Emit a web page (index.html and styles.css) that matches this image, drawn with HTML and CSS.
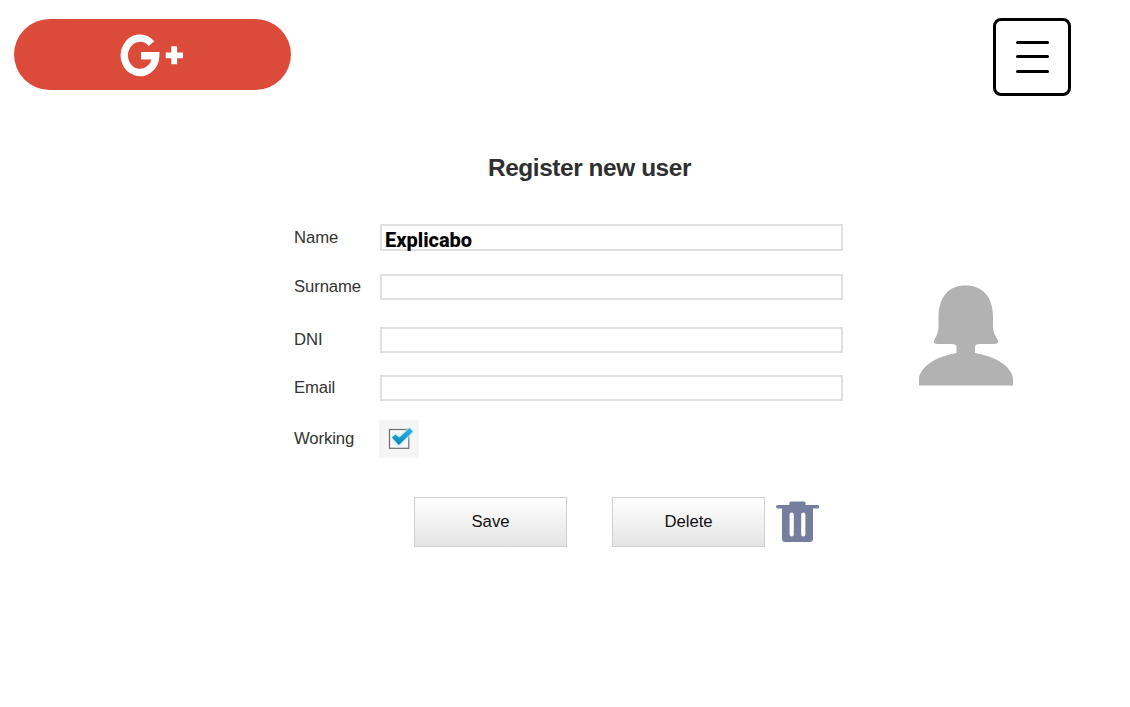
FILE: index.html
```html
<!DOCTYPE html>
<html lang="en">
<head>
<meta charset="utf-8">
<title>Register new user</title>
<link rel="stylesheet" href="styles.css">
</head>
<body>
<header class="header">
  <a class="gplus" href="#" aria-label="Google Plus">
    <svg class="gplus-icon" viewBox="0 0 64 44">
      <path d="M31.500 10.600A15.700 17.200 0 1 0 35.700 22.800H21" fill="none" stroke="#fff" stroke-width="7.400"/>
      <path d="M54.200 13.300v18M45.700 22.300h17.300" fill="none" stroke="#fff" stroke-width="5.800"/>
    </svg>
  </a>
  <button class="menu" aria-label="Menu">
    <span class="menu-line"></span>
    <span class="menu-line"></span>
    <span class="menu-line"></span>
  </button>
</header>
<main class="main">
  <form class="form">
    <h1 class="title">Register new user</h1>
    <div class="row row-name"><span class="label">Name</span><div class="field" contenteditable="true">Explicabo</div></div>
    <div class="row row-surname"><label class="label" for="surname">Surname</label><input class="field" id="surname"></div>
    <div class="row row-dni"><label class="label" for="dni">DNI</label><input class="field" id="dni"></div>
    <div class="row row-email"><label class="label" for="email">Email</label><input class="field" id="email"></div>
    <div class="row row-working">
      <span class="label">Working</span>
      <span class="check">
        <svg width="40" height="38" viewBox="0 0 40 38">
          <defs>
            <linearGradient id="tick" x1="0" y1="0" x2="0" y2="1"><stop offset="0" stop-color="#35b4e2"/><stop offset="1" stop-color="#0785b8"/></linearGradient>
            <filter id="glow" x="-30%" y="-30%" width="160%" height="160%"><feGaussianBlur stdDeviation="1.300"/></filter>
          </defs>
          <rect x="10.500" y="9.500" width="19.300" height="18.800" fill="#f8f8f8" stroke="#6e6e6e" stroke-width="1.200"/>
          <path d="M14 18l3.500-3 3.500 3.500 9-10 3.500 3.500-13.500 13z" fill="#b9ecff" stroke="#b9ecff" stroke-width="2" filter="url(#glow)"/>
          <path d="M12.800 17.500l3.500-3 4 3L30.500 8l3.300 3.500-14 13.500z" fill="url(#tick)"/>
        </svg>
      </span>
    </div>
    <div class="actions">
      <button class="button" type="button">Save</button>
      <button class="button" type="button">Delete</button>
      <svg class="trash" width="43" height="42" viewBox="0 0 43 42">
        <path fill="#757e9f" fill-rule="evenodd" d="M13.500 4V2q0-1.500 1.500-1.500h13q1.500 0 1.500 1.500v2H41.500a1.700 1.700 0 0 1 0 3.500H37V37.500q0 3.500-3.500 3.500H9.500Q6 41 6 37.500V7.500H1.800a1.700 1.700 0 0 1 0-3.500zM13.600 13.500v20a2.100 2.100 0 0 0 4.200 0v-20a2.100 2.100 0 0 0-4.200 0zM25.200 13.500v20a2.100 2.100 0 0 0 4.200 0v-20a2.100 2.100 0 0 0-4.200 0z"/>
      </svg>
    </div>
  </form>
  <svg class="avatar" width="94" height="101" viewBox="0 0 94 101">
    <path fill="#b2b2b2" d="M0 100.500V94C1 81 19 71 37.500 68V62Q37.500 59 33 59H18Q14 58.500 15 55.500Q19 49 19.500 43V32C20 11 30 .5 46.500.5S74 11 74 32V43Q74.500 49 79 55.500Q80 58.500 76 59H60.500Q56 59 56 62V68C75 71 93 81 94 94V100.500z"/>
  </svg>
</main>
</body>
</html>
```
FILE: styles.css
```css
* { box-sizing: border-box; }
body {
  margin: 0;
  height: 707px;
  overflow: hidden;
  background: #fff;
  font-family: "Liberation Sans", Arial, sans-serif;
  font-size: 16.7px;
  color: #333;
}
.header {
  display: flex;
  justify-content: space-between;
  align-items: flex-start;
  height: 96px;
  padding: 18px 59px 0 14px;
}
.gplus {
  width: 277px;
  height: 71px;
  margin-top: 1px;
  padding: 14px 0 0 106px;
  border-radius: 36px;
  background: #dc4b3a;
}
.gplus-icon { display: block; width: 64px; height: 44px; }
.menu {
  display: flex;
  flex-direction: column;
  align-items: center;
  gap: 11.5px;
  width: 78px;
  height: 78px;
  padding: 19.5px 0 0;
  border: 3px solid #000;
  border-radius: 8px;
  background: #fff;
}
.menu-line { width: 33px; height: 3px; border-radius: 2px; background: #000; }
.main { display: flex; align-items: flex-start; padding: 57px 0 0 294px; }
.form { width: 549px; }
.title {
  margin: 0 0 41px;
  padding-left: 42px;
  font-size: 24.4px;
  line-height: 30px;
  letter-spacing: -0.42px;
  text-align: center;
  color: #2f2f2f;
}
.row { display: flex; align-items: center; height: 26px; }
.label { width: 86px; line-height: 20px; letter-spacing: -0.1px; }
.row-name { height: 27px; margin-bottom: 23px; }
.row-name .label { padding-top: 1px; }
.row-surname { margin-bottom: 27px; }
.row-dni { margin-bottom: 22px; }
.row-email { margin-bottom: 19px; }
.row-working { height: 38px; margin-bottom: 39px; }
.field {
  width: 463px;
  height: 26px;
  padding: 3px 0 0 3px;
  border: 2px solid #e0e0e0;
  outline: 0;
  background: #fff;
  color: #000;
  font: 800 20px/22px Roboto, sans-serif;
}
.row-name .field { height: 27px; }
.check { width: 40px; height: 38px; margin-left: -1px; background: #f5f5f5; }
.check svg { display: block; }
.actions { display: flex; padding-left: 120px; }
.button {
  width: 153px;
  height: 50px;
  margin-right: 45px;
  padding: 0;
  border: 1px solid #d0d0d0;
  background: linear-gradient(#fff, #e4e4e4);
  color: #111;
  font: 16.7px "Liberation Sans", Arial, sans-serif;
}
.button + .button { margin-right: 11px; }
.trash { flex: none; margin-top: 4px; }
.avatar { margin: 132px 0 0 76px; }
```
